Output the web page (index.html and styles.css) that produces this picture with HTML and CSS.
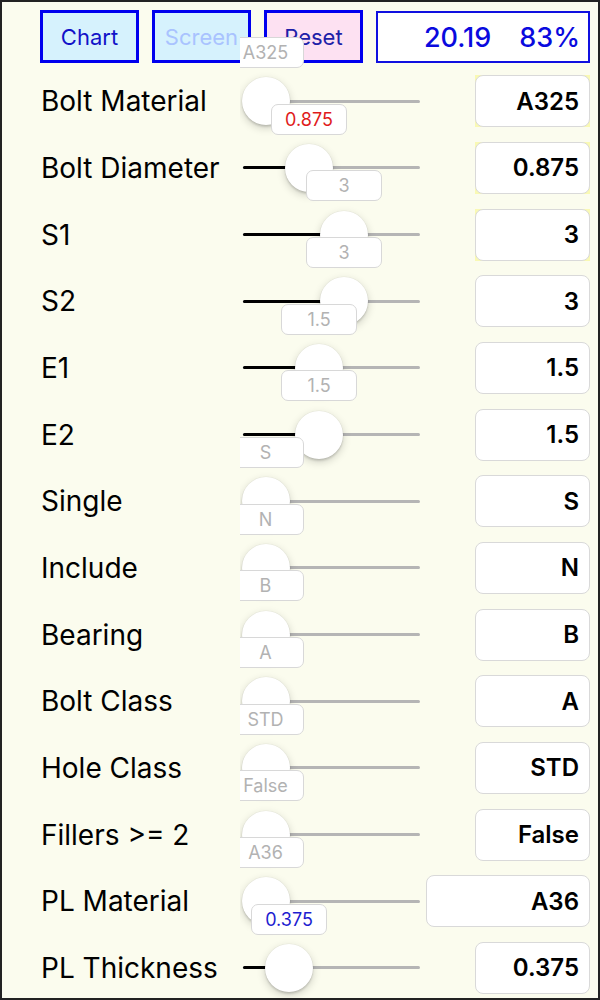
FILE: index.html
```html
<!DOCTYPE html>
<html lang="en">
<head>
    <meta charset="UTF-8">
    <meta name="viewport" content="width=device-width, initial-scale=1.0">
    <title>Bolt Calculator</title>
    <link rel="stylesheet" href="styles.css">
</head>
<body>
    <div class="page">
        <header class="toolbar">
            <button class="tool-button chart">Chart</button>
            <button class="tool-button screen">Screen</button>
            <button class="tool-button reset">Reset</button>
            <div class="result">
                <span>20.19</span>
                <span>83%</span>
            </div>
        </header>

        <main class="rows">
            <div class="row">
                <span class="row-label">Bolt Material</span>
                <div class="slider" style="--pos: 25.5px">
                    <div class="track"><div class="fill"></div></div>
                    <div class="thumb"></div>
                    <div class="bubble">A325</div>
                </div>
                <div class="value-wrap highlight"><div class="value">A325</div></div>
            </div>

            <div class="row">
                <span class="row-label">Bolt Diameter</span>
                <div class="slider" style="--pos: 69px">
                    <div class="track"><div class="fill"></div></div>
                    <div class="thumb"></div>
                    <div class="bubble red">0.875</div>
                </div>
                <div class="value-wrap highlight"><div class="value">0.875</div></div>
            </div>

            <div class="row">
                <span class="row-label">S1</span>
                <div class="slider" style="--pos: 104px">
                    <div class="track"><div class="fill"></div></div>
                    <div class="thumb"></div>
                    <div class="bubble">3</div>
                </div>
                <div class="value-wrap highlight"><div class="value">3</div></div>
            </div>

            <div class="row">
                <span class="row-label">S2</span>
                <div class="slider" style="--pos: 104px">
                    <div class="track"><div class="fill"></div></div>
                    <div class="thumb"></div>
                    <div class="bubble">3</div>
                </div>
                <div class="value-wrap"><div class="value">3</div></div>
            </div>

            <div class="row">
                <span class="row-label">E1</span>
                <div class="slider" style="--pos: 79px">
                    <div class="track"><div class="fill"></div></div>
                    <div class="thumb"></div>
                    <div class="bubble">1.5</div>
                </div>
                <div class="value-wrap"><div class="value">1.5</div></div>
            </div>

            <div class="row">
                <span class="row-label">E2</span>
                <div class="slider" style="--pos: 79px">
                    <div class="track"><div class="fill"></div></div>
                    <div class="thumb"></div>
                    <div class="bubble">1.5</div>
                </div>
                <div class="value-wrap"><div class="value">1.5</div></div>
            </div>

            <div class="row">
                <span class="row-label">Single</span>
                <div class="slider" style="--pos: 25.5px">
                    <div class="track"><div class="fill"></div></div>
                    <div class="thumb"></div>
                    <div class="bubble">S</div>
                </div>
                <div class="value-wrap"><div class="value">S</div></div>
            </div>

            <div class="row">
                <span class="row-label">Include</span>
                <div class="slider" style="--pos: 25.5px">
                    <div class="track"><div class="fill"></div></div>
                    <div class="thumb"></div>
                    <div class="bubble">N</div>
                </div>
                <div class="value-wrap"><div class="value">N</div></div>
            </div>

            <div class="row">
                <span class="row-label">Bearing</span>
                <div class="slider" style="--pos: 25.5px">
                    <div class="track"><div class="fill"></div></div>
                    <div class="thumb"></div>
                    <div class="bubble">B</div>
                </div>
                <div class="value-wrap"><div class="value">B</div></div>
            </div>

            <div class="row">
                <span class="row-label">Bolt Class</span>
                <div class="slider" style="--pos: 25.5px">
                    <div class="track"><div class="fill"></div></div>
                    <div class="thumb"></div>
                    <div class="bubble">A</div>
                </div>
                <div class="value-wrap"><div class="value">A</div></div>
            </div>

            <div class="row">
                <span class="row-label">Hole Class</span>
                <div class="slider" style="--pos: 25.5px">
                    <div class="track"><div class="fill"></div></div>
                    <div class="thumb"></div>
                    <div class="bubble">STD</div>
                </div>
                <div class="value-wrap"><div class="value">STD</div></div>
            </div>

            <div class="row">
                <span class="row-label">Fillers &gt;= 2</span>
                <div class="slider" style="--pos: 25.5px">
                    <div class="track"><div class="fill"></div></div>
                    <div class="thumb"></div>
                    <div class="bubble">False</div>
                </div>
                <div class="value-wrap"><div class="value">False</div></div>
            </div>

            <div class="row">
                <span class="row-label">PL Material</span>
                <div class="slider" style="--pos: 25.5px">
                    <div class="track"><div class="fill"></div></div>
                    <div class="thumb"></div>
                    <div class="bubble">A36</div>
                </div>
                <div class="value-wrap wide"><div class="value">A36</div></div>
            </div>

            <div class="row">
                <span class="row-label">PL Thickness</span>
                <div class="slider" style="--pos: 49px">
                    <div class="track"><div class="fill"></div></div>
                    <div class="thumb"></div>
                    <div class="bubble blue">0.375</div>
                </div>
                <div class="value-wrap"><div class="value">0.375</div></div>
            </div>
        </main>
    </div>
</body>
</html>
```

FILE: styles.css
```css
* {
    margin: 0;
    padding: 0;
    box-sizing: border-box;
}

body {
    font-family: Inter, "Noto Sans", sans-serif;
    background-color: #fbfcee;
    color: #000;
}

.page {
    width: 600px;
    height: 1000px;
    border: 2px solid #222;
    overflow: hidden;
    background-color: #fbfcee;
}

.toolbar {
    height: 66px;
    padding: 8px 0 0 38px;
    display: flex;
    align-items: flex-start;
    gap: 13px;
}

.tool-button {
    width: 99px;
    height: 53px;
    border: 3px solid #0000ee;
    font-family: inherit;
    font-size: 22px;
    color: #1212c8;
    background-color: #d6f2fd;
}

.tool-button.screen {
    color: #a9c3ff;
}

.tool-button.reset {
    background-color: #fde1f2;
    color: #2020a8;
}

.result {
    width: 214px;
    height: 52px;
    margin-top: 1px;
    border: 2px solid #1010e0;
    background-color: #fff;
    display: flex;
    justify-content: flex-end;
    align-items: center;
    gap: 28px;
    padding-right: 8px;
    font-size: 27px;
    font-weight: 500;
    color: #0a0ade;
}

.row {
    height: 66.67px;
    display: flex;
    align-items: center;
    padding-right: 8px;
}

.row-label {
    width: 238px;
    padding-left: 39px;
    font-size: 28px;
    white-space: nowrap;
}

/* slider, 240px .. 420px */
.slider {
    position: relative;
    width: 180px;
    height: 100%;
    clip-path: inset(-80px 0 -80px 0);
}

.track {
    position: absolute;
    left: 3px;
    right: 0;
    top: calc(50% - 1.5px);
    height: 3px;
    border-radius: 2px;
    background-color: #b5b5b5;
}

.fill {
    width: calc(var(--pos) - 3px);
    height: 100%;
    border-radius: 2px;
    background-color: #000;
}

.thumb {
    position: absolute;
    left: calc(var(--pos) - 24px);
    top: calc(50% - 24px);
    width: 48px;
    height: 48px;
    border-radius: 50%;
    background-color: #fff;
    box-shadow: 0 0 0 0.5px rgba(0, 0, 0, 0.05),
                0 3px 8px rgba(0, 0, 0, 0.18),
                0 2px 2px rgba(0, 0, 0, 0.12);
}

.bubble {
    position: absolute;
    left: calc(var(--pos) - 38px);
    top: -31px;
    width: 76px;
    height: 31px;
    border: 1px solid #d8d8d8;
    border-radius: 7px;
    background-color: #fff;
    display: flex;
    align-items: center;
    justify-content: center;
    font-size: 18px;
    color: #b2b2b2;
}

.bubble.red {
    color: #e01a1a;
}

.bubble.blue {
    color: #1d1dd0;
}

.value-wrap {
    margin-left: auto;
    width: 115px;
    height: 52px;
}

.value-wrap.wide {
    width: 164px;
}

.value-wrap.highlight {
    background-color: #f9f9b4;
}

.value {
    height: 100%;
    border: 1px solid #d9d9d9;
    border-radius: 8px;
    background-color: #fff;
    display: flex;
    align-items: center;
    justify-content: flex-end;
    padding-right: 10px;
    font-size: 24px;
    font-weight: 600;
}
```
